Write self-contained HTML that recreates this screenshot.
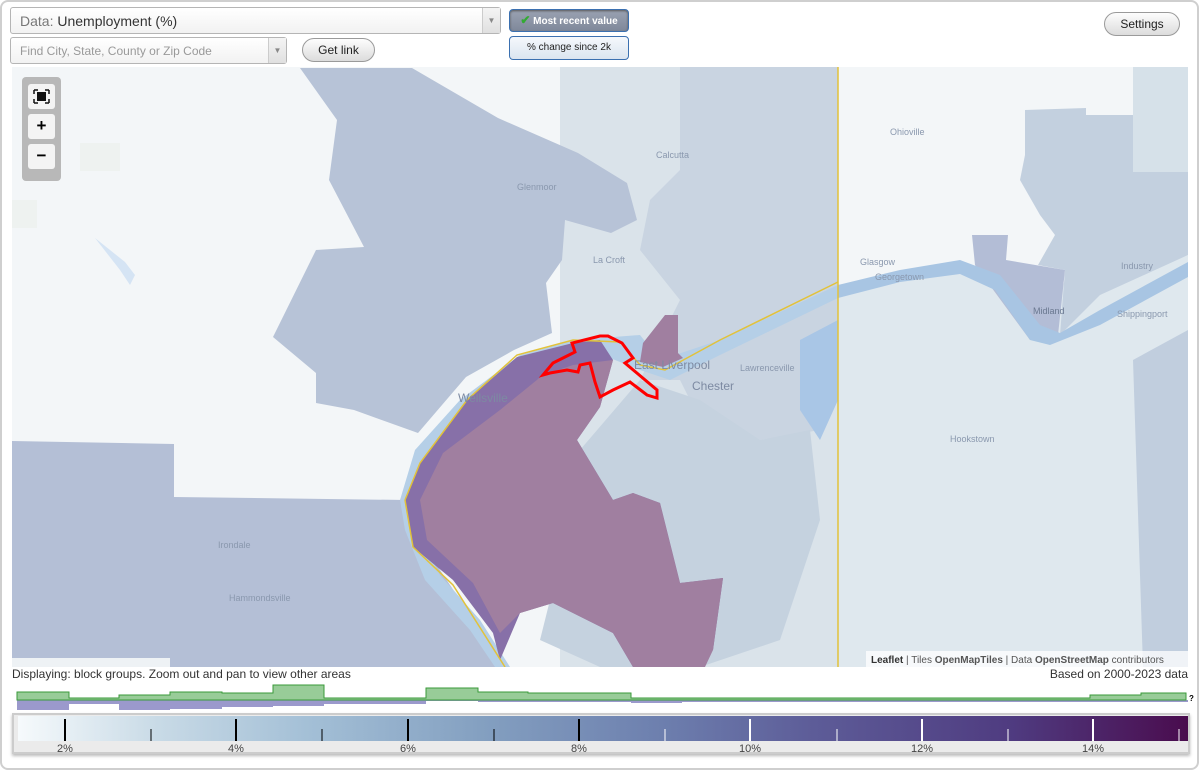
<!DOCTYPE html>
<html><head><meta charset="utf-8"><style>
*{box-sizing:border-box;margin:0;padding:0}
body{width:1200px;height:771px;background:#fff;font-family:"Liberation Sans",Arial,sans-serif;position:relative;overflow:hidden}
.frame{position:absolute;left:0;top:0;width:1199px;height:770px;border:2px solid #cfcfcf;border-radius:8px}
.sel{position:absolute;background:linear-gradient(#fff,#f2f2f2);border:1px solid #b5b5b5;border-radius:3px;color:#888}
.arrow{position:absolute;right:0;top:0;bottom:0;width:18px;border-left:1px solid #ccc;background:linear-gradient(#f4f4f4,#e0e0e0);font-size:8px;color:#888;text-align:center}
.btn{position:absolute;border:1px solid #9a9a9a;border-radius:12px;background:linear-gradient(#fdfdfd,#dcdcdc);font-size:12px;color:#222;text-align:center}
.tb{position:absolute;left:509px;width:120px;border:1px solid #3b70b0;border-radius:4px;font-size:10px;text-align:center}
</style></head><body>
<div class="frame"></div>
<div class="sel" style="left:10px;top:7px;width:491px;height:27px"><span style="position:absolute;left:9px;top:5px;font-size:14px;color:#777">Data: <span style="color:#333">Unemployment (%)</span></span><div class="arrow" style="line-height:26px">▼</div></div>
<div class="sel" style="left:10px;top:37px;width:277px;height:27px"><span style="position:absolute;left:9px;top:6px;font-size:12px;color:#999">Find City, State, County or Zip Code</span><div class="arrow" style="line-height:26px">▼</div></div>
<div class="btn" style="left:302px;top:38px;width:73px;height:24px;line-height:22px">Get link</div>
<div class="tb" style="top:9px;height:23px;line-height:21px;background:linear-gradient(#9aa2b2,#7f889a);color:#fff;font-weight:bold;box-shadow:inset 0 1px 2px #555"><span style="color:#3a3;font-size:12px">✔</span> Most recent value</div>
<div class="tb" style="top:36px;height:24px;line-height:22px;background:linear-gradient(#f5f8fc,#dbe5f0);color:#222">% change since 2k</div>
<div class="btn" style="left:1104px;top:12px;width:76px;height:24px;line-height:22px">Settings</div>

<svg style="position:absolute;left:12px;top:67px" width="1176" height="600" viewBox="12 67 1176 600">
<rect x="12" y="67" width="1176" height="600" fill="#f3f6f8"/>
<rect x="560" y="67" width="278" height="600" fill="#dae3ea"/>
<rect x="838" y="67" width="350" height="600" fill="#f3f6f8"/>
<polygon points="838,285 960,264 1100,290 1188,255 1188,667 838,667" fill="#dfe8ee"/>
<polygon points="1025,110 1086,108 1086,115 1133,115 1133,160 1188,170 1188,255 1100,295 1060,335 1065,270 1038,265 1055,235 1040,215 1020,180 1025,155" fill="#c3d0df"/>
<rect x="1133" y="67" width="55" height="105" fill="#d6e1e9"/>
<polygon points="1133,360 1188,330 1188,667 1143,667" fill="#c1cede"/>
<polygon points="972,235 1008,235 1006,260 1065,270 1058,335 1030,340 975,265" fill="#b3bdd6"/>
<polygon points="680,67 838,67 838,400 820,430 760,440 700,420 680,380 640,380 660,340 680,300 640,250 650,200 680,170" fill="#c9d4e1"/>
<polygon points="300,68 412,68 498,118 578,153 627,183 637,220 611,233 565,220 562,260 546,283 552,333 514,350 466,377 418,433 354,410 316,403 316,373 273,337 316,250 364,247 329,180 337,120" fill="#b7c3d7"/>
<polygon points="12,441 174,444 174,497 406,500 420,540 460,600 505,667 12,667" fill="#b4bfd6"/>
<rect x="12" y="658" width="158" height="9" fill="#eef2f5"/>
<rect x="80" y="143" width="40" height="28" fill="#eef2f0"/>
<rect x="12" y="200" width="25" height="28" fill="#eef2f0"/>
<polygon points="95,238 110,250 125,262 135,275 130,285 120,270" fill="#d5e4f4"/>
<polygon points="580,450 640,380 700,400 760,440 810,430 820,520 780,640 700,667 600,667 540,640 560,560" fill="#c5d2df"/>
<polygon points="838,285 900,270 960,260 1000,275 1040,325 1060,333 1100,310 1188,262 1188,277 1100,325 1050,345 1030,340 995,290 960,274 900,282 838,298" fill="#a8c5e3"/>
<polygon points="400,500 415,450 460,400 520,355 575,340 640,335 660,360 720,340 838,285 838,298 720,355 670,380 640,370 590,350 530,370 470,415 425,470 412,520 440,575 480,620 510,667 495,667 470,630 425,580 405,530" fill="#b5cfe7"/>
<polygon points="800,340 838,320 838,400 820,440 800,410" fill="#a9c6e6"/>
<polygon points="573,343 517,357 467,400 420,463 405,500 413,547 453,580 493,633 500,660 520,613 553,603 587,620 613,633 633,667 677,667 713,650 723,578 680,583 660,503 633,493 613,500 577,440 600,407 613,360 600,340" fill="#8770a8"/>
<polygon points="543,375 573,365 613,360 600,407 577,440 613,500 633,493 660,503 680,583 723,578 713,650 705,667 633,667 613,633 587,620 553,603 520,613 500,633 473,583 427,540 420,500 443,453 500,410" fill="#a07fa0"/>
<polygon points="665,315 678,315 678,353 683,358 663,367 640,362 643,343" fill="#a07fa0"/>
<polyline points="405,500 420,463 467,400 517,355 573,340 620,342 640,365 665,370 720,340 838,282" fill="none" stroke="#e2c23a" stroke-width="1.5"/>
<polyline points="405,500 413,547 453,585 505,667" fill="none" stroke="#e2c23a" stroke-width="1.5"/>
<line x1="838" y1="67" x2="838" y2="667" stroke="#e2c23a" stroke-width="1.5"/>
<polygon points="543,375 553,363 575,352 572,343 600,336 608,336 622,343 633,358 625,363 657,390 657,398 647,395 630,382 613,390 600,397 595,382 590,363 580,365 578,372 567,370 550,373" fill="none" stroke="#f00" stroke-width="3"/>
<g font-size="9" fill="#8a98ae" font-family="Liberation Sans,sans-serif">
<text x="517" y="190">Glenmoor</text><text x="656" y="158">Calcutta</text><text x="593" y="263">La Croft</text>
<text x="890" y="135">Ohioville</text><text x="860" y="265">Glasgow</text><text x="875" y="280">Georgetown</text>
<text x="1121" y="269">Industry</text><text x="1117" y="317">Shippingport</text><text x="1033" y="314" fill="#6a7890">Midland</text>
<text x="950" y="442">Hookstown</text><text x="740" y="371">Lawrenceville</text><text x="218" y="548">Irondale</text><text x="229" y="601">Hammondsville</text>
<text x="458" y="402" font-size="12" fill="#7d8aa2">Wellsville</text><text x="692" y="390" font-size="12" fill="#7d8aa2">Chester</text><text x="634" y="369" font-size="12" fill="#7d8aa2">East Liverpool</text>
</g>
<rect x="866" y="651" width="322" height="16" fill="rgba(255,255,255,0.75)"/>
<text x="871" y="663" font-size="10" fill="#555" font-family="Liberation Sans,sans-serif"><tspan font-weight="bold" fill="#333">Leaflet</tspan> | Tiles <tspan font-weight="bold">OpenMapTiles</tspan> | Data <tspan font-weight="bold">OpenStreetMap</tspan> contributors</text>
</svg>

<div style="position:absolute;left:22px;top:77px;width:39px;height:104px;background:#b8b8b8;border-radius:4px"></div>
<div style="position:absolute;left:28px;top:84px;width:27px;height:25px;background:#f4f4f4;border-radius:3px">
<svg width="27" height="25"><rect x="9" y="8" width="9" height="9" fill="#111"/><path d="M6 6h4M6 6v4M21 6h-4M21 6v4M6 19h4M6 19v-4M21 19h-4M21 19v-4" stroke="#111" stroke-width="1.5"/></svg></div>
<div style="position:absolute;left:28px;top:114px;width:27px;height:25px;background:#f4f4f4;border-radius:3px;text-align:center;line-height:24px;font-size:17px;font-weight:bold">+</div>
<div style="position:absolute;left:28px;top:144px;width:27px;height:25px;background:#f4f4f4;border-radius:3px;text-align:center;line-height:23px;font-size:17px;font-weight:bold">−</div>

<div style="position:absolute;left:12px;top:667px;font-size:12px;color:#333">Displaying: block groups. Zoom out and pan to view other areas</div>
<div style="position:absolute;right:12px;top:667px;font-size:12px;color:#333">Based on 2000-2023 data</div>

<svg style="position:absolute;left:0;top:684px" width="1200" height="30">
<path d="M17,16 V26 H69 V20 H119 V26 H170 V25 H222 V23 H273 V22 H324 V20 H426 V17 H478 V18 H631 V19 H682 V18 H1188 V16Z" fill="#9b99cc"/>
<path d="M17,16 V8 H69 V14 H119 V11 H170 V8 H222 V9 H273 V1 H324 V14 H426 V4 H478 V8 H528 V9 H631 V14 H1090 V11 H1141 V9 H1186 V16Z" fill="#98cc98" stroke="#3a9a3a" stroke-width="1"/>
<text x="1189" y="17" font-size="8" font-weight="bold" font-family="Liberation Sans">?</text>
</svg>

<div style="position:absolute;left:12px;top:713px;width:1178px;height:41px;border:2px solid #ccc;background:#ebebeb;box-shadow:0 2px 3px #bbb">
<div style="position:absolute;left:4px;top:1px;right:0;height:25px;background:linear-gradient(90deg,#f6fafc,#c8dae6 12%,#a3bfd6 25%,#839fc0 40%,#6d7fae 55%,#5d5c98 68%,#4f3b80 85%,#4a0c4e)"></div>
<svg style="position:absolute;left:0;top:0" width="1178" height="40">
<g stroke="#000" stroke-width="2"><line x1="51" y1="4" x2="51" y2="26"/><line x1="222" y1="4" x2="222" y2="26"/><line x1="394" y1="4" x2="394" y2="26"/><line x1="565" y1="4" x2="565" y2="26"/></g>
<g stroke="#000" stroke-width="1"><line x1="137" y1="14" x2="137" y2="26"/><line x1="308" y1="14" x2="308" y2="26"/><line x1="480" y1="14" x2="480" y2="26"/></g>
<g stroke="#fff" stroke-width="2"><line x1="736" y1="4" x2="736" y2="26"/><line x1="908" y1="4" x2="908" y2="26"/><line x1="1079" y1="4" x2="1079" y2="26"/></g>
<g stroke="#fff" stroke-width="1"><line x1="651" y1="14" x2="651" y2="26"/><line x1="823" y1="14" x2="823" y2="26"/><line x1="994" y1="14" x2="994" y2="26"/><line x1="1165" y1="14" x2="1165" y2="26"/></g>
<g font-size="11" fill="#444" font-family="Liberation Sans" text-anchor="middle"><text x="51" y="37">2%</text><text x="222" y="37">4%</text><text x="394" y="37">6%</text><text x="565" y="37">8%</text><text x="736" y="37">10%</text><text x="908" y="37">12%</text><text x="1079" y="37">14%</text></g>
</svg>
</div>
</body></html>
